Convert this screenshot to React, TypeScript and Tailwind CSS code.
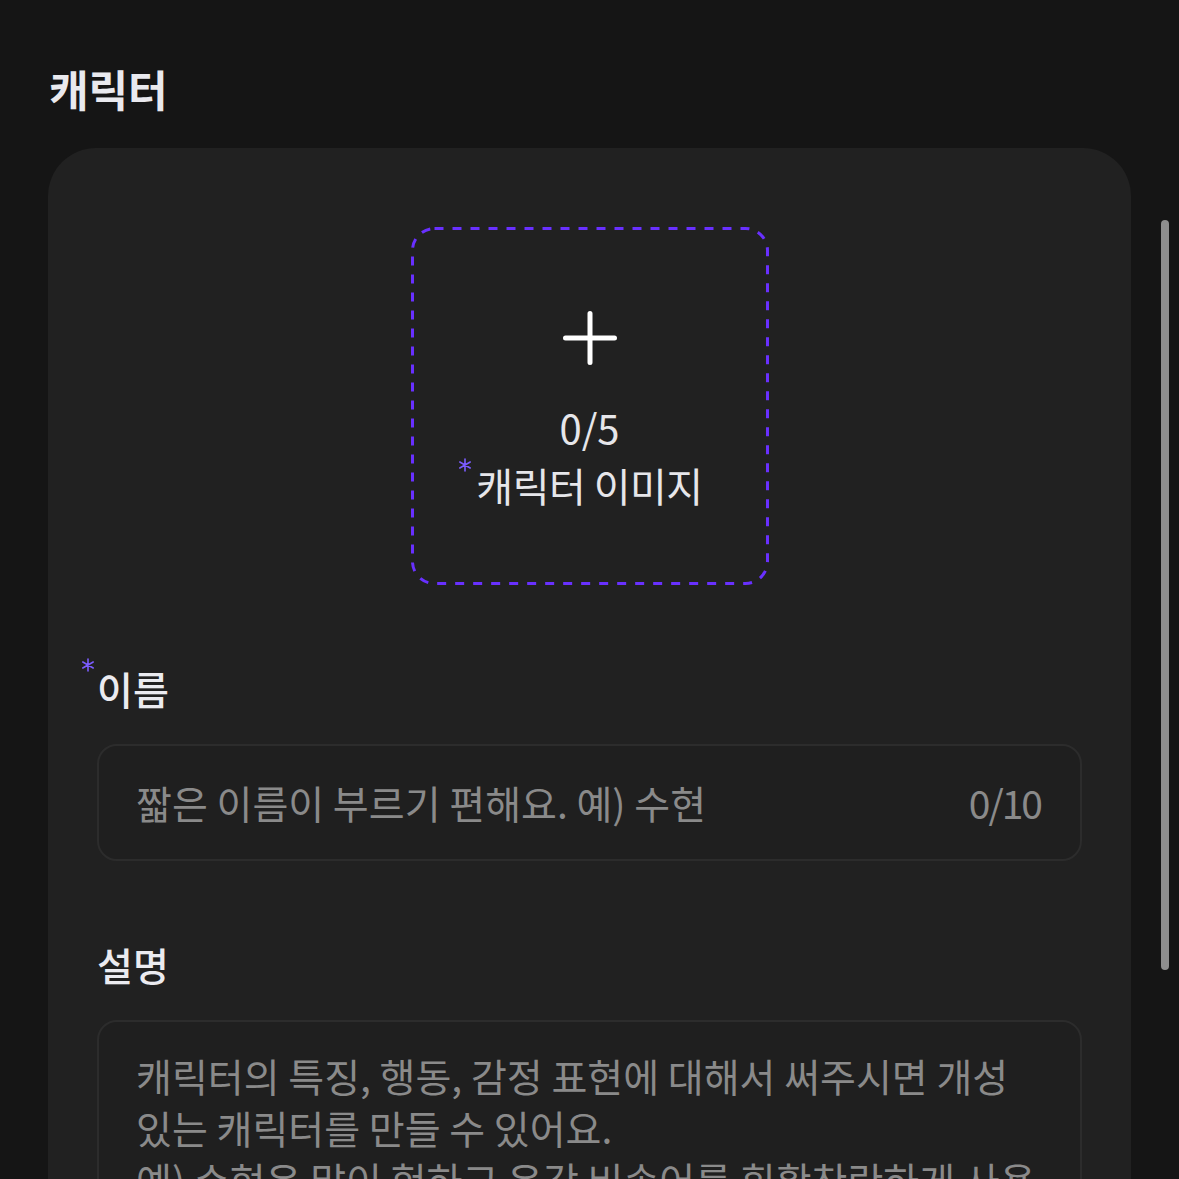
const font = { fontFamily: '"Noto Sans CJK KR", "Noto Sans", sans-serif' };

const PlusIcon = () => (
  <svg width="54" height="54" viewBox="0 0 54 54" fill="none">
    <path d="M27 2.5v49M2.5 27h49" stroke="#ffffff" strokeWidth="5" strokeLinecap="round" />
  </svg>
);

// thin six-armed asterisk used for required fields
const Required = ({ className }: { className: string }) => (
  <svg className={`absolute ${className}`} width="14" height="14" viewBox="0 0 14 14" fill="none">
    <path d="M7 1v12M1.8 4l10.4 6M1.8 10l10.4-6" stroke="#7b5cff" strokeWidth="1.6" strokeLinecap="round" />
  </svg>
);

export default function App() {
  return (
    <div className="relative h-screen overflow-hidden bg-[#151515] px-12" style={font}>
      <h1 className="pt-[56px] pl-[1px] text-[43px] font-bold leading-[64px] text-[#e9e9ee]">캐릭터</h1>

      <div className="mt-[28px] rounded-[48px] bg-[#212121] px-[49px] pt-[79px] pb-20">
        {/* image upload */}
        <div className="relative mx-auto flex h-[358px] w-[358px] flex-col items-center pt-[84px]">
          <svg className="absolute inset-0" width="358" height="358" viewBox="0 0 358 358" fill="none">
            <rect x="1.5" y="1.5" width="355" height="355" rx="22" stroke="#6930ff" strokeWidth="3" strokeDasharray="9 9" />
          </svg>
          <PlusIcon />
          <p className="mt-[38px] text-[40px] leading-[48px] text-[#e6e6ea]">0/5</p>
          <p className="relative mt-[10px] text-[40px] leading-[48px] tracking-[-0.5px] text-[#e6e6ea]">
            <Required className="-left-[18px] -top-[3px]" />
            캐릭터 이미지
          </p>
        </div>

        {/* name */}
        <label className="relative mt-[79px] block w-fit text-[39px] font-medium leading-[48px] text-[#ebebf0]">
          <Required className="-left-[16px] -top-[6px]" />
          이름
        </label>
        <div className="mt-[32px] flex h-[117px] items-center justify-between rounded-[20px] border-2 border-[#2c2c2c] bg-[#1f1f1f] pl-[37px] pr-[39px] text-[39px] text-[#8a8a8a]">
          <span>짧은 이름이 부르기 편해요. 예) 수현</span>
          <span className="tracking-[-2px]">0/10</span>
        </div>

        {/* description */}
        <label className="mt-[79px] block text-[39px] font-medium leading-[48px] text-[#ebebf0]">설명</label>
        <div className="mt-[32px] h-[400px] overflow-hidden rounded-[20px] border-2 border-[#2c2c2c] bg-[#1f1f1f] pl-[37px] pr-[39px] pt-[27px] text-[39px] leading-[52px] text-[#8a8a8a]">
          <p className="whitespace-nowrap">캐릭터의 특징, 행동, 감정 표현에 대해서 써주시면 개성</p>
          <p className="whitespace-nowrap">있는 캐릭터를 만들 수 있어요.</p>
          <p className="whitespace-nowrap">예) 수현은 말이 험하고 온갖 비속어를 휘황찬란하게 사용</p>
          <p className="whitespace-nowrap">하며 자신의 감정을 거침없이 드러내요.</p>
        </div>
      </div>

      {/* scroll indicator */}
      <div className="absolute right-[10px] top-[220px] h-[750px] w-[8px] rounded-full bg-[#8e8e8e]" />
    </div>
  );
}
